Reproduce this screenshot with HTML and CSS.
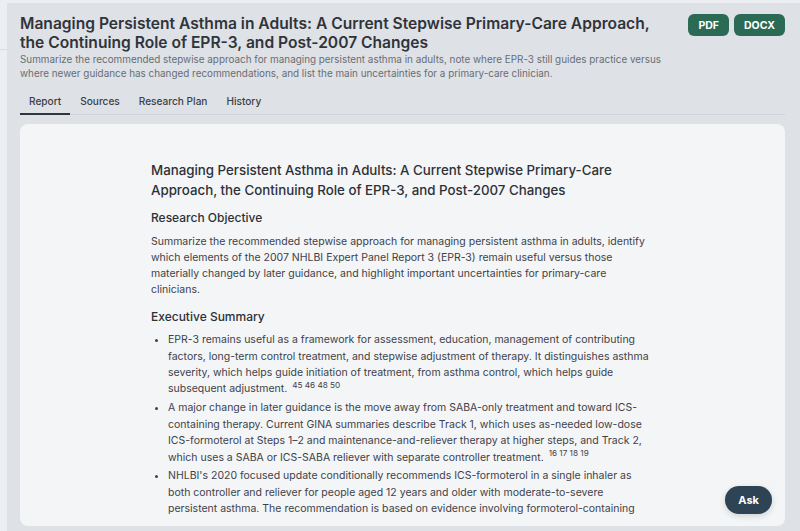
FILE: index.html
```html
<!DOCTYPE html>
<html>
<head>
  <meta charset="utf-8">
  <title>Managing Persistent Asthma in Adults</title>
  <link rel="stylesheet" href="styles.css">
</head>
<body>
  <div class="rail"><div class="rail-top"></div></div>
  <div class="main">
    <div class="head">
      <div class="head-text">
        <h1>Managing Persistent Asthma in Adults: A Current Stepwise Primary-Care Approach, the Continuing Role of EPR-3, and Post-2007 Changes</h1>
        <p class="prompt">Summarize the recommended stepwise approach for managing persistent asthma in adults, note where EPR-3 still guides practice versus where newer guidance has changed recommendations, and list the main uncertainties for a primary-care clinician.</p>
      </div>
      <div class="exports">
        <button class="btn-export">PDF</button>
        <button class="btn-export">DOCX</button>
      </div>
    </div>

    <div class="tabs">
      <a class="tab active">Report</a>
      <a class="tab">Sources</a>
      <a class="tab">Research Plan</a>
      <a class="tab">History</a>
    </div>

    <div class="card">
      <div class="scroll">
        <div class="report">
          <h2>Managing Persistent Asthma in Adults: A Current Stepwise Primary-Care Approach, the Continuing Role of EPR-3, and Post-2007 Changes</h2>
          <h3>Research Objective</h3>
          <p>Summarize the recommended stepwise approach for managing persistent asthma in adults, identify which elements of the 2007 NHLBI Expert Panel Report 3 (EPR-3) remain useful versus those materially changed by later guidance, and highlight important uncertainties for primary-care clinicians.</p>
          <h3>Executive Summary</h3>
          <ul>
            <li>EPR-3 remains useful as a framework for assessment, education, management of contributing factors, long-term control treatment, and stepwise adjustment of therapy. It distinguishes asthma severity, which helps guide initiation of treatment, from asthma control, which helps guide subsequent adjustment. <sup>45 46 48 50</sup></li>
            <li>A major change in later guidance is the move away from SABA-only treatment and toward ICS-containing therapy. Current GINA summaries describe Track 1, which uses as-needed low-dose ICS-formoterol at Steps 1&ndash;2 and maintenance-and-reliever therapy at higher steps, and Track 2, which uses a SABA or ICS-SABA reliever with separate controller treatment. <sup>16 17 18 19</sup></li>
            <li>NHLBI's 2020 focused update conditionally recommends ICS-formoterol in a single inhaler as both controller and reliever for people aged 12 years and older with moderate-to-severe persistent asthma. The recommendation is based on evidence involving formoterol-containing regimens.</li>
          </ul>
        </div>
      </div>
      <button class="ask">Ask</button>
    </div>
  </div>
</body>
</html>
```

FILE: styles.css
```css
* {
  box-sizing: border-box;
}

html, body {
  height: 100%;
}

body {
  margin: 0;
  display: flex;
  overflow: hidden;
  background: #eceef1;
  font-family: Inter, "Liberation Sans", sans-serif;
  color: #2e3339;
}

.rail {
  width: 7px;
  flex: none;
}

.rail-top {
  height: 50px;
  border-bottom: 1px solid #d9dce1;
}

.main {
  flex: 1;
  margin-top: 3px;
  padding: 11px 15px 5px 13px;
  background: #dee1e6;
  display: flex;
  flex-direction: column;
  min-width: 0;
}

.head {
  display: flex;
  gap: 12px;
}

.head-text {
  flex: 1;
}

h1 {
  margin: 0;
  padding-right: 8px;
  font-size: 15.6px;
  line-height: 19px;
  font-weight: 600;
  color: #2f343a;
}

.prompt {
  margin: 0;
  font-size: 9.9px;
  line-height: 14px;
  color: #686d74;
}

.exports {
  display: flex;
  gap: 5px;
}

.btn-export {
  height: 22px;
  padding: 0 10px;
  border: none;
  border-radius: 6px;
  background: #2b6b56;
  color: #fff;
  font-family: inherit;
  font-size: 10.5px;
  font-weight: 700;
}

.tabs {
  display: flex;
  margin-top: 14.5px;
  border-bottom: 1px solid #cfd3d9;
}

.tab {
  padding: 0 9px 5px;
  margin-right: 1px;
  font-size: 10.1px;
  line-height: 13px;
  font-weight: 500;
  color: #3a3f46;
  border-bottom: 2px solid transparent;
  margin-bottom: -1px;
}

.tab.active {
  border-bottom-color: #30363d;
}

.card {
  position: relative;
  flex: 1;
  min-height: 0;
  margin-top: 9.5px;
  padding-bottom: 7px;
  background: #f4f5f7;
  border-radius: 8px;
  display: flex;
  flex-direction: column;
}

.scroll {
  flex: 1;
  min-height: 0;
  overflow: hidden;
  padding: 36px 0 0 131px;
}

.report {
  width: 500px;
}

h2 {
  margin: 0;
  font-size: 13.3px;
  line-height: 20px;
  font-weight: 500;
  color: #2c3137;
}

h3 {
  margin: 9px 0 7.5px;
  font-size: 12px;
  line-height: 17px;
  font-weight: 500;
  color: #2c3137;
}

.report p {
  margin: 0;
  font-size: 10.5px;
  line-height: 16.3px;
  color: #3d4249;
}

ul {
  margin: 0;
  padding-left: 17px;
  font-size: 10.5px;
  line-height: 16.4px;
  color: #3d4249;
}

li {
  margin-bottom: 2.5px;
}

sup {
  font-size: 8.2px;
  line-height: 0;
  margin-left: 2px;
}

.ask {
  position: absolute;
  right: 13px;
  bottom: 12px;
  height: 28px;
  padding: 0 13px;
  border: none;
  border-radius: 14px;
  background: #2e4455;
  color: #fff;
  font-family: inherit;
  font-size: 11px;
  font-weight: 700;
  box-shadow: 0 2px 6px rgba(0, 0, 0, 0.15);
}
```
